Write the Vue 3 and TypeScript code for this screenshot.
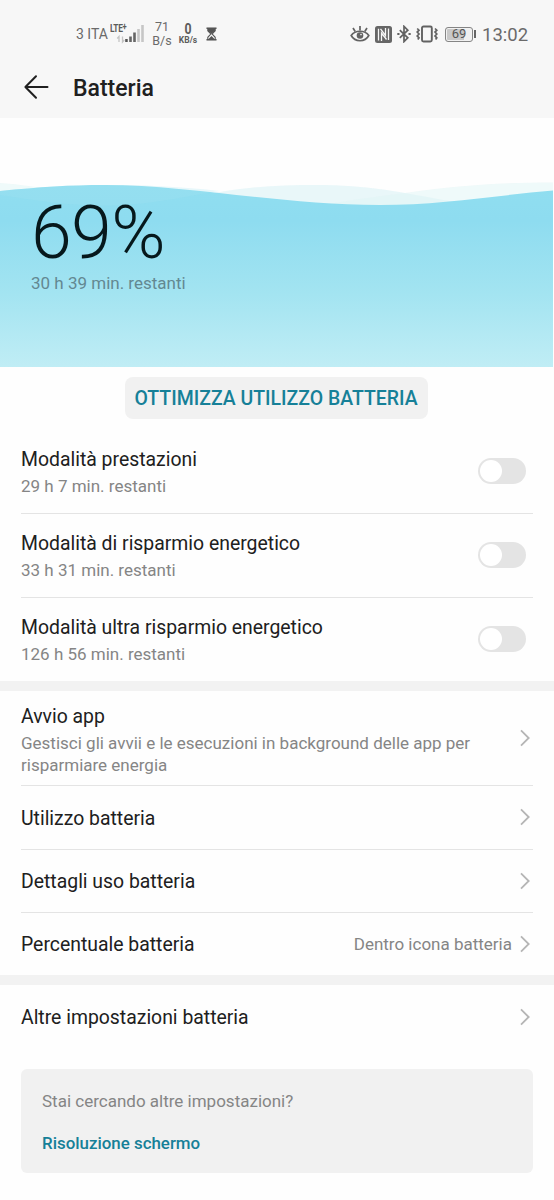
<script setup lang="ts">
interface Mode {
  title: string
  remaining: string
  enabled: boolean
}

interface Entry {
  title: string
  kind: string
  detail?: string
  value?: string
}

const modes: Mode[] = [
  { title: 'Modalità prestazioni', remaining: '29 h 7 min. restanti', enabled: false },
  { title: 'Modalità di risparmio energetico', remaining: '33 h 31 min. restanti', enabled: false },
  { title: 'Modalità ultra risparmio energetico', remaining: '126 h 56 min. restanti', enabled: false },
]

const entries: Entry[] = [
  {
    title: 'Avvio app',
    kind: 'tall',
    detail: 'Gestisci gli avvii e le esecuzioni in background delle app per risparmiare energia',
  },
  { title: 'Utilizzo batteria', kind: 'medium' },
  { title: 'Dettagli uso batteria', kind: 'plain' },
  { title: 'Percentuale batteria', kind: 'plain', value: 'Dentro icona batteria' },
]
</script>

<template>
  <div class="screen">
    <header class="top">
      <div class="status">
        <div class="status-left">
          <span class="carrier">3 ITA</span>
          <div class="signal">
            <span class="lte">LTE<sup>+</sup></span>
            <svg width="34" height="20" viewBox="0 0 34 20">
              <path d="M8 18v-5.500l-1.800 2M11.500 12.500V18l1.800-2" fill="none" stroke="#c4c4c4" stroke-width="1.300" />
              <rect x="14.200" y="15" width="2.500" height="3" fill="#555" />
              <rect x="18.200" y="12.500" width="2.600" height="5.500" fill="#666" />
              <rect x="22.200" y="8.500" width="2.600" height="9.500" fill="#666" />
              <rect x="26.200" y="5" width="2.600" height="13" fill="#c6c6c6" />
              <rect x="30.200" y="1" width="2.600" height="17" fill="#c6c6c6" />
            </svg>
          </div>
          <div class="rate"><span>71</span><span>B/s</span></div>
          <div class="rate bold"><b>0</b><small>KB/s</small></div>
          <svg class="hourglass" width="11" height="14" viewBox="0 0 11 14">
            <path d="M0.500 1.200h10M0.500 12.800h10" stroke="#4c4c4c" stroke-width="1.600" />
            <path d="M1.800 1.500v2.200L4.800 7l-3 3.300v2.200h7.400v-2.200L6.200 7l3-3.300V1.500z" fill="#f7f7f7" stroke="#555" stroke-width="1.100" />
            <path d="M2 2h7v1.700L5.500 7 2 3.700zM2.500 12l3-3 3 3z" fill="#555" />
          </svg>
        </div>
        <div class="status-right">
          <svg class="eye" width="20" height="18" viewBox="0 0 20 18">
            <g fill="none" stroke="#626262" stroke-width="1.700">
              <path d="M1.200 10.500C5 4.800 15 4.800 18.800 10.500 15 17.500 5 17.500 1.200 10.500z" />
              <path d="M10 1v4.500M3 3l2.200 3.500M17 3l-2.200 3.500" />
            </g>
            <circle cx="10" cy="10.500" r="3.300" fill="#626262" />
            <circle cx="11" cy="9.600" r="0.800" fill="#f7f7f7" />
          </svg>
          <svg class="nfc" width="17" height="17" viewBox="0 0 17 17">
            <rect x="0" y="0" width="17" height="17" rx="2.500" fill="#666" />
            <path d="M3.500 14.500V2.800M6.500 15V7l5 6.500M5.500 2.800l5 6.700V2M13.500 2.500V14" fill="none" stroke="#f7f7f7" stroke-width="1.300" />
          </svg>
          <svg class="bluetooth" width="14" height="18" viewBox="0 0 14 18">
            <path d="M2.800 5.200l8 7.600L7 16.600V1.400l3.800 3.800-8 7.600" fill="none" stroke="#626262" stroke-width="1.700" />
            <path d="M0.300 9h2.200M11.500 9h2.200" stroke="#626262" stroke-width="2" />
          </svg>
          <svg class="vibrate" width="22" height="18" viewBox="0 0 22 18">
            <rect x="6" y="1.500" width="9.800" height="15" rx="1.500" fill="none" stroke="#626262" stroke-width="1.900" />
            <path d="M1.200 3.500l1.800 1.700-1.800 1.900L3 9l-1.800 1.900L3 12.800l-1.200 1.700M19 3.500l1.800 1.700L19 7.100 20.800 9 19 10.900l1.800 1.900-1.200 1.700" fill="none" stroke="#626262" stroke-width="1.700" />
          </svg>
          <div class="battery"><span>69</span></div>
          <i class="battery-tip"></i>
          <span class="clock">13:02</span>
        </div>
      </div>
      <div class="title-bar">
        <svg class="back" width="26" height="26" viewBox="0 0 26 26">
          <path d="M13 2.200L2.400 13 13 23.800M2.500 13h22" fill="none" stroke="#202020" stroke-width="2" stroke-linecap="round" stroke-linejoin="round" />
        </svg>
        <h1>Batteria</h1>
      </div>
    </header>

    <section class="hero">
      <svg class="waves" width="553" height="249" viewBox="0 0 553 249">
        <defs>
          <linearGradient id="water" gradientUnits="userSpaceOnUse" x1="0" y1="66" x2="0" y2="249">
            <stop offset="0" stop-color="#90def0" />
            <stop offset="0.200" stop-color="#8edcf0" />
            <stop offset="0.600" stop-color="#a3e4f1" />
            <stop offset="1" stop-color="#c0edf5" />
          </linearGradient>
        </defs>
        <path d="M0 77C50 86 70 88 120 87.500C160 87 190 79 220 74C250 68.500 285 67 315 67C370 67 400 74 455 84L500 90V110H0z" fill="#dff4f6" fill-opacity="0.700" />
        <path d="M0 65C40 68 80 76 130 86L330 86C350 82 375 79 405 75C460 67 500 64.500 553 64.500V110H0z" fill="#dff5f6" fill-opacity="0.500" />
        <path d="M0 73C40 69 70 67 105 67C190 67 280 87 380 87C440 87 500 77 553 72.500V249H0z" fill="url(#water)" />
        <path d="M0 77C50 85 80 88 110 87.500C160 86 190 77 220 73C175 68 140 67 105 67C70 67 40 69 0 73z" fill="#a5e4ef" fill-opacity="0.250" />
      </svg>
      <div class="reading">
        <div class="percent">69%</div>
        <div class="remaining">30 h 39 min. restanti</div>
      </div>
    </section>

    <div class="action"><button type="button">OTTIMIZZA UTILIZZO BATTERIA</button></div>

    <section class="group">
      <div v-for="mode in modes" :key="mode.title" class="row mode">
        <div class="copy">
          <div class="label">{{ mode.title }}</div>
          <div class="detail">{{ mode.remaining }}</div>
        </div>
        <span class="switch" :class="{ on: mode.enabled }"><i></i></span>
      </div>
    </section>

    <section class="group divided">
      <div v-for="entry in entries" :key="entry.title" class="row" :class="entry.kind">
        <div class="copy">
          <div class="label">{{ entry.title }}</div>
          <div v-if="entry.detail" class="detail">{{ entry.detail }}</div>
        </div>
        <span v-if="entry.value" class="value">{{ entry.value }}</span>
        <svg class="chevron" width="10" height="18" viewBox="0 0 10 18">
          <path d="M1 1.300L8.700 9 1 16.700" />
        </svg>
      </div>
    </section>

    <section class="group divided">
      <div class="row last">
        <div class="copy"><div class="label">Altre impostazioni batteria</div></div>
        <svg class="chevron" width="10" height="18" viewBox="0 0 10 18">
          <path d="M1 1.300L8.700 9 1 16.700" />
        </svg>
      </div>
    </section>

    <aside class="suggestion">
      <p>Stai cercando altre impostazioni?</p>
      <a>Risoluzione schermo</a>
    </aside>
  </div>
</template>

<style>
body {
  margin: 0;
  background: #fefefe;
}
</style>

<style scoped>
.screen {
  width: 554px;
  height: 1200px;
  overflow: hidden;
  background: #fefefe;
  color: #202020;
  font-family: Roboto, "Liberation Sans", sans-serif;
}
.top {
  height: 118px;
  background: #f7f7f7;
}
.status {
  display: flex;
  justify-content: space-between;
  height: 58px;
  padding: 10px 26px 0 76px;
  box-sizing: border-box;
  color: #6a6a6a;
}
.status-left,
.status-right {
  display: flex;
  align-items: center;
  height: 48px;
}
.carrier {
  width: 35px;
  font-size: 14px;
  white-space: nowrap;
}
.signal {
  position: relative;
  width: 34px;
  height: 20px;
}
.signal svg {
  display: block;
}
.lte {
  position: absolute;
  left: -1px;
  top: 0;
  font: 700 11px/10px Roboto, sans-serif;
  letter-spacing: -0.400px;
  color: #5c5c5c;
  transform: scaleX(0.760);
  transform-origin: left;
}
.lte sup {
  font-size: 10px;
  line-height: 0;
  vertical-align: 2px;
}
.rate {
  display: flex;
  flex-direction: column;
  align-items: center;
  width: 20px;
  margin-left: 7px;
  font-size: 12.500px;
  line-height: 14px;
}
.rate.bold {
  margin-left: 6px;
  color: #5c5c5c;
}
.rate b {
  font-size: 14.500px;
  line-height: 13px;
  transform: scaleX(0.850);
}
.rate small {
  font-size: 8.500px;
  line-height: 9px;
  font-weight: 700;
}
.hourglass {
  margin-left: 8px;
}
.nfc {
  margin-left: 5px;
}
.bluetooth {
  margin-left: 5px;
}
.vibrate {
  margin-left: 5px;
}
.battery {
  display: flex;
  align-items: center;
  justify-content: center;
  width: 28px;
  height: 15px;
  margin-left: 7px;
  box-sizing: border-box;
  border: 1px solid #858585;
  border-radius: 3px;
  background: linear-gradient(90deg, #c8c8c8 69%, #f0f0f0 69%);
  box-shadow: inset 0 0 0 1px #f1f1f1;
  color: #555;
  font-size: 13px;
  line-height: 14px;
}
.battery-tip {
  width: 2px;
  height: 8px;
  margin-left: 1px;
  background: #666;
}
.clock {
  width: 46px;
  margin: 1px 0 0 6px;
  font-size: 18.500px;
  white-space: nowrap;
}
.title-bar {
  display: flex;
  align-items: center;
  height: 58px;
  padding-left: 23px;
}
h1 {
  margin: 3px 0 0 24px;
  font-size: 23px;
  line-height: 30px;
  font-weight: 500;
}
.hero {
  position: relative;
  height: 249px;
}
.waves {
  position: absolute;
  inset: 0;
}
.reading {
  position: relative;
  padding: 76px 0 0 31px;
}
.percent {
  height: 78px;
  font-size: 73.500px;
  line-height: 78px;
  font-weight: 300;
  letter-spacing: -0.700px;
  color: #06181c;
}
.remaining {
  font-size: 17px;
  line-height: 22px;
  color: #638891;
}
.action {
  display: flex;
  justify-content: center;
  height: 62px;
  padding: 10px 2px 0 0;
  box-sizing: border-box;
}
button {
  width: 303px;
  height: 42px;
  padding: 2px 0 0;
  border: 0;
  border-radius: 8px;
  background: #f1f1f1;
  color: #168098;
  font: 500 19.450px/40px Roboto, sans-serif;
  white-space: nowrap;
}
.group.divided {
  border-top: 10px solid #f2f2f2;
}
.row {
  display: flex;
  align-items: center;
  height: 63px;
  margin: 0 21px;
  box-sizing: border-box;
}
.row + .row {
  border-top: 1px solid #e4e4e4;
}
.row.mode {
  height: 84px;
  padding-right: 7px;
}
.row.tall {
  height: 94px;
}
.row.medium {
  height: 64px;
}
.row.last {
  height: 64px;
}
.copy {
  flex: 1;
  padding-top: 1px;
}
.tall .copy {
  padding-top: 3px;
}
.label {
  font-size: 19.400px;
  line-height: 27px;
}
.detail {
  max-width: 460px;
  font-size: 17px;
  line-height: 22px;
  color: #858585;
}
.mode .detail {
  margin: 2px 0 1px;
}
.mode:first-child .copy {
  padding-top: 2px;
}
.tall .detail {
  margin-top: 2px;
}
.switch {
  width: 48px;
  height: 26px;
  padding: 2px;
  box-sizing: border-box;
  border-radius: 13px;
  background: #e4e4e4;
}
.mode + .mode .switch {
  margin-top: -2px;
}
.switch i {
  display: block;
  width: 22px;
  height: 22px;
  border-radius: 50%;
  background: #fff;
}
.switch.on i {
  margin-left: auto;
}
.value {
  margin-right: 8px;
  font-size: 17px;
  color: #858585;
}
.chevron {
  margin-right: 3px;
}
.row + .row .chevron {
  margin-top: -1px;
}
.chevron path {
  fill: none;
  stroke: #b5b5b5;
  stroke-width: 1.800;
}
.suggestion {
  height: 104px;
  margin: 20px 21px 0;
  padding: 21px 21px 19px;
  box-sizing: border-box;
  border-radius: 6px;
  background: #f1f1f1;
}
.suggestion p {
  margin: 0 0 20px;
  font-size: 17px;
  line-height: 22px;
  color: #858585;
}
.suggestion a {
  display: block;
  font-size: 16.900px;
  line-height: 22px;
  font-weight: 500;
  color: #168098;
}
</style>
